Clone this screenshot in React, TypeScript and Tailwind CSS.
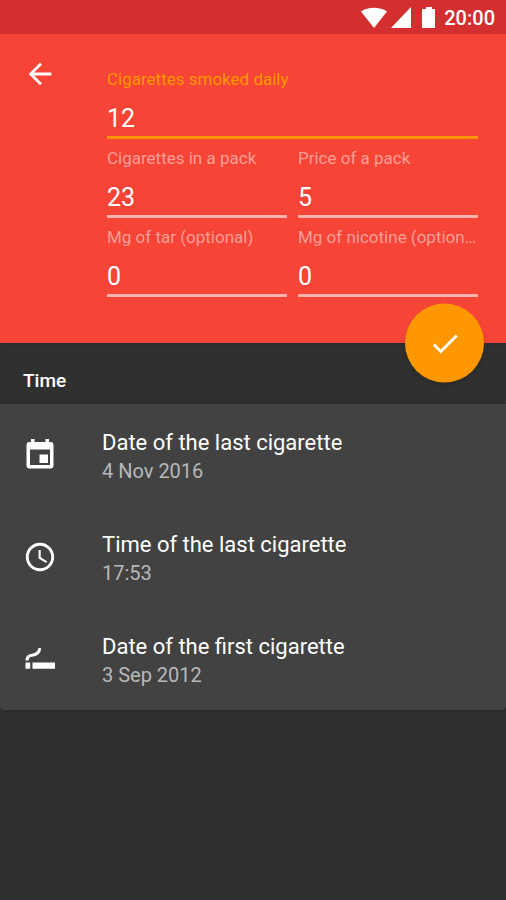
import { useState } from 'react'
import type { ReactNode } from 'react'
import { MdAccessTime, MdArrowBack, MdCheck } from 'react-icons/md'

interface FieldProps {
  id: string
  label: string
  initial: string
  active?: boolean
}

function Field({ id, label, initial, active = false }: FieldProps) {
  const [value, setValue] = useState(initial)

  return (
    <div className="min-w-0 pt-[7px]">
      <label
        htmlFor={id}
        className={`block truncate text-[17px] leading-6 ${active ? 'text-[#ff9800]' : 'text-[#fb9e97]'}`}
      >
        {label}
      </label>
      <input
        id={id}
        type="text"
        inputMode="numeric"
        value={value}
        onChange={(e) => setValue(e.target.value)}
        className={`block h-12 w-full border-b-3 bg-transparent pt-[10px] text-[25px] text-white outline-none ${
          active ? 'border-[#ff9008]' : 'border-[#fdb4ae]'
        }`}
      />
    </div>
  )
}

interface TimeRowProps {
  icon: ReactNode
  title: string
  value: string
}

function TimeRow({ icon, title, value }: TimeRowProps) {
  return (
    <button type="button" className="flex h-[102px] w-full items-center gap-[45px] px-[23px] text-left">
      <span className="shrink-0 text-white">{icon}</span>
      <span className="flex min-w-0 flex-col pt-1">
        <span className="truncate text-[22px] leading-7 text-white">{title}</span>
        <span className="truncate text-[20px] leading-7 text-[#b8b8b8]">{value}</span>
      </span>
    </button>
  )
}

function CalendarIcon() {
  return (
    <svg viewBox="0 0 34 34" className="size-[34px]" fill="currentColor" aria-hidden="true">
      <path
        fillRule="evenodd"
        d="M8 1h3.500v3h11V1H26v3h1.500a3 3 0 0 1 3 3v20.500a3 3 0 0 1-3 3h-21a3 3 0 0 1-3-3V7a3 3 0 0 1 3-3H8zM7 11.500V27h20V11.500z"
      />
      <path d="M16.500 16.500h8.500V25h-8.500z" />
    </svg>
  )
}

function CigaretteIcon() {
  return (
    <svg viewBox="0 0 34 34" className="size-[34px]" fill="currentColor" aria-hidden="true">
      <path d="M2.500 20.500h4.700v6.200H2.500zM9.500 20.500H32v6.200H9.500z" />
      <path
        d="M4 18.500c0-3.500 2-5 5-5.300s4-.9 5.500-2.200 2-2 2.300-4.800"
        fill="none"
        stroke="currentColor"
        strokeWidth="3"
      />
    </svg>
  )
}

function StatusBar() {
  return (
    <div className="flex h-[34px] items-center justify-end bg-[#d32f2f] pt-[2px] pr-[11px] text-white">
      <svg viewBox="0 0 78 22" className="mr-[7px] h-[22px] w-[78px]" fill="currentColor" aria-hidden="true">
        <path d="M2 4.500C9 -.5 21 -.5 28 4.500L15 21z" />
        <path d="M52 0v21H32z" />
        <path d="M67 0h6v2h3v19H63V2h4z" />
      </svg>
      <span className="text-[20px] font-medium">20:00</span>
    </div>
  )
}

export default function App() {
  return (
    <div className="flex min-h-screen flex-col border-b border-[#302730] bg-[#303030] font-[Roboto,sans-serif]">
      <StatusBar />
      <header className="relative flex bg-[#f64436] pt-[26px] pr-7 pb-[46px] pl-[23px] shadow-sm">
        <button type="button" aria-label="Back" className="-mt-[3px] mr-[50px] size-[34px] shrink-0 text-white">
          <MdArrowBack size={34} />
        </button>
        <form className="min-w-0 grow">
          <Field id="daily" label="Cigarettes smoked daily" initial="12" active />
          <div className="grid grid-cols-2 gap-x-[11px]">
            <Field id="pack" label="Cigarettes in a pack" initial="23" />
            <Field id="price" label="Price of a pack" initial="5" />
            <Field id="tar" label="Mg of tar (optional)" initial="0" />
            <Field id="nicotine" label="Mg of nicotine (optional)" initial="0" />
          </div>
        </form>
        <button
          type="button"
          aria-label="Save"
          className="absolute right-[22px] bottom-0 flex size-[79px] translate-y-1/2 items-center justify-center rounded-full bg-[#ff9800] text-white shadow-md"
        >
          <MdCheck size={34} />
        </button>
      </header>
      <main>
        <h2 className="px-[23px] pt-6 pb-[9px] text-[19px] leading-7 font-medium text-white">Time</h2>
        <section className="rounded-b-sm bg-[#424242] shadow-sm">
          <TimeRow icon={<CalendarIcon />} title="Date of the last cigarette" value="4 Nov 2016" />
          <TimeRow icon={<MdAccessTime size={34} />} title="Time of the last cigarette" value="17:53" />
          <TimeRow icon={<CigaretteIcon />} title="Date of the first cigarette" value="3 Sep 2012" />
        </section>
      </main>
    </div>
  )
}
